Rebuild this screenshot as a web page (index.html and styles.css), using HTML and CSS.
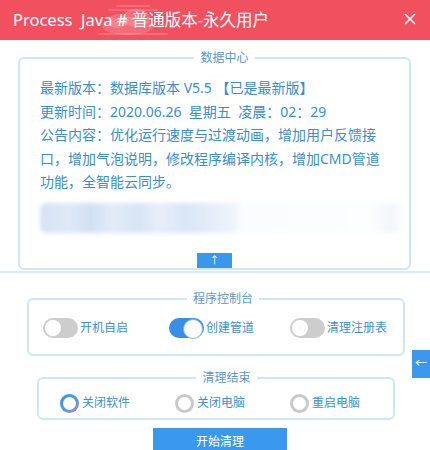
FILE: index.html
```html
<!DOCTYPE html>
<html lang="zh-CN">
<head>
<meta charset="utf-8">
<title>Process Java</title>
<link rel="stylesheet" href="styles.css">
</head>
<body>
<div class="window">
  <header class="titlebar">
    <svg class="clouds" width="120" height="40" viewBox="0 0 120 40">
      <g fill="#fff" fill-opacity="0.16">
        <ellipse cx="50" cy="26" rx="26" ry="9"/>
        <ellipse cx="58" cy="18" rx="14" ry="9"/>
        <ellipse cx="40" cy="21" rx="10" ry="7"/>
        <rect x="30" y="9" width="50" height="2" rx="1"/>
        <rect x="38" y="5" width="34" height="2" rx="1"/>
        <rect x="20" y="33" width="70" height="2" rx="1"/>
      </g>
    </svg>
    <span class="title">Process  Java # 普通版本-永久用户</span>
    <svg class="close" width="12" height="12" viewBox="0 0 12 12">
      <path d="M1.5 1.5 L10.5 10.5 M10.5 1.5 L1.5 10.5" stroke="#fff" stroke-width="1.6" stroke-linecap="round"/>
    </svg>
  </header>

  <section class="panel">
    <fieldset class="box box-data">
      <legend align="center">数据中心</legend>
      <div class="info">
        <p>最新版本：数据库版本 V5.5 【已是最新版】</p>
        <p>更新时间：2020.06.26&nbsp; 星期五&nbsp; 凌晨：02：29</p>
        <p>公告内容：优化运行速度与过渡动画，增加用户反馈接口，增加气泡说明，修改程序编译内核，增加CMD管道功能，全智能云同步。</p>
      </div>
      <div class="blurred"></div>
      <div class="up-btn">↑</div>
    </fieldset>
  </section>

  <fieldset class="box box-console">
    <legend align="center">程序控制台</legend>
    <div class="console-row">
      <label class="switch-item"><span class="switch"></span>开机自启</label>
      <label class="switch-item"><span class="switch on"></span>创建管道</label>
      <label class="switch-item"><span class="switch"></span>清理注册表</label>
    </div>
  </fieldset>

  <fieldset class="box box-finish">
    <legend align="center">清理结束</legend>
    <div class="finish-row">
      <label class="radio-item"><span class="radio checked"></span>关闭软件</label>
      <label class="radio-item"><span class="radio"></span>关闭电脑</label>
      <label class="radio-item"><span class="radio"></span>重启电脑</label>
    </div>
  </fieldset>

  <div class="start-btn">开始清理</div>

  <div class="side-tab">←</div>
</div>
</body>
</html>
```

FILE: styles.css
```css
* { box-sizing: border-box; }

html, body {
  margin: 0;
  padding: 0;
  background: #ffffff;
}

body {
  font-family: "Noto Sans", "Noto Sans CJK SC", sans-serif;
  color: #3b8dcc;
}

.window {
  position: relative;
  width: 430px;
  height: 450px;
  overflow: hidden;
  background: #ffffff;
}

.titlebar {
  position: relative;
  height: 40px;
  background: #f1505f;
  display: flex;
  align-items: center;
  justify-content: space-between;
  padding: 0 14px 1px 13px;
}

.clouds {
  position: absolute;
  left: 78px;
  top: 0;
}

.title {
  position: relative;
  color: #ffffff;
  font-size: 16.5px;
  white-space: pre;
  line-height: 20px;
}

.close {
  position: relative;
  margin-top: -1px;
}

.panel {
  padding: 10px 19px 1px 18px;
  border-bottom: 2px solid #d8ebf6;
}

.box {
  margin: 0;
  border: 2px solid #d0e6f2;
  border-radius: 6px;
  min-width: 0;
}

.box legend {
  margin: 0 auto;
  padding: 0 6px;
  font-size: 12px;
  line-height: 16px;
  color: #5a97c9;
}

.box-data {
  padding: 0 0 0 20px;
}

.info {
  padding-top: 10px;
  width: 346px;
  font-size: 14px;
  line-height: 23.5px;
  color: #3b8dcc;
}

.info p {
  margin: 0;
}

.blurred {
  margin-top: 9.5px;
  width: 362px;
  height: 30px;
  border-radius: 6px;
  background: linear-gradient(90deg,
    #d5e3f4 0%, #dfe9f7 8%, #d0e0f3 14%, #e3ecf8 20%, #d7e4f5 27%,
    #e6eef9 33%, #d9e6f6 40%, #e4edf9 47%, #edf3fb 53%, #fbfcfe 56%,
    #fdfeff 90%, #f3f6fa 97%, #fbfcfe 100%);
  filter: blur(2px);
}

.up-btn {
  margin: 20px 0 0 157px;
  width: 35px;
  height: 15px;
  background: #3a98ec;
  color: #ffffff;
  font-size: 10px;
  line-height: 15px;
  text-align: center;
}

.box-console {
  margin: 18px 0 0 27px;
  width: 378px;
  padding: 11px 0 16px 14px;
}

.console-row {
  display: grid;
  grid-template-columns: 126px 121px auto;
  align-items: center;
}

.switch-item,
.radio-item {
  display: flex;
  align-items: center;
  font-size: 12px;
  line-height: 20px;
  color: #3f8fd1;
}

.switch {
  position: relative;
  width: 35px;
  height: 20px;
  border-radius: 10px;
  background: #cdcdcd;
  margin-right: 2px;
  flex: none;
}

.switch::after {
  content: "";
  position: absolute;
  top: 2px;
  left: 2px;
  width: 16px;
  height: 16px;
  border-radius: 50%;
  background: #ffffff;
}

.switch.on {
  background: #3b8ee8;
}

.switch.on::after {
  left: auto;
  right: 1px;
  top: 1px;
  width: 18px;
  height: 18px;
  border: 1px solid #7fb6ef;
}

.box-finish {
  margin: 14px 0 0 37px;
  width: 358px;
  padding: 7px 0 5px 21px;
}

.finish-row {
  display: grid;
  grid-template-columns: 115px 115px auto;
  align-items: center;
}

.radio {
  position: relative;
  width: 19px;
  height: 19px;
  border-radius: 50%;
  background: #c9c9c9;
  margin-right: 3px;
  flex: none;
}

.radio::after {
  content: "";
  position: absolute;
  inset: 3px;
  border-radius: 50%;
  background: #ffffff;
}

.radio.checked {
  background: linear-gradient(135deg, #2f8fe6 0%, #4a9ae6 45%, #9a8bd8 100%);
}

.start-btn {
  margin: 8px 0 0 153px;
  width: 134px;
  height: 32px;
  background: #3a98ee;
  color: #ffffff;
  font-size: 12px;
  line-height: 28px;
  text-align: center;
}

.side-tab {
  position: absolute;
  right: 0;
  top: 350px;
  width: 18px;
  height: 28px;
  background: #3a98ee;
  color: #ffffff;
  font-size: 12px;
  line-height: 28px;
  text-align: center;
}
```
